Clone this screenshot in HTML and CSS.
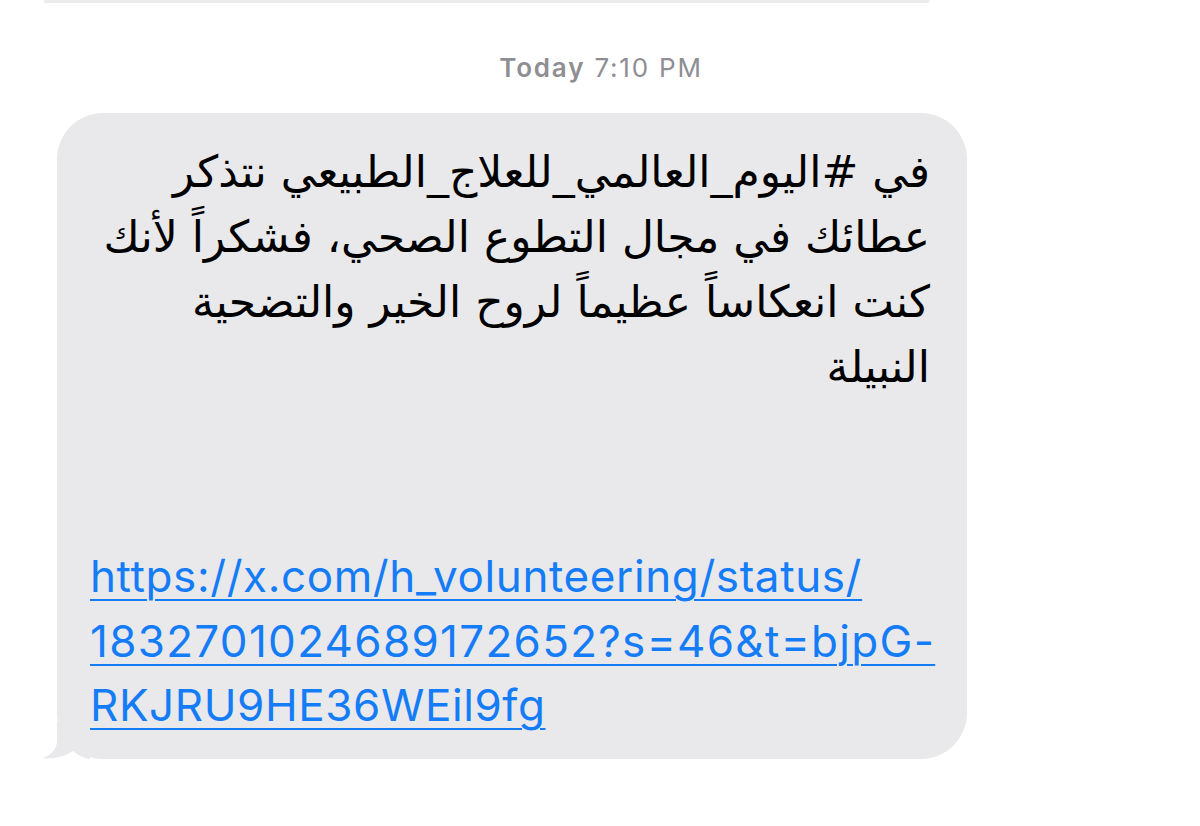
FILE: index.html
```html
<!DOCTYPE html>
<html lang="en">
<head>
<meta charset="utf-8">
<title>Message</title>
<link rel="stylesheet" href="styles.css">
</head>
<body>
<div class="prev"></div>
<div class="stamp"><span class="day">Today</span> 7:10 PM</div>
<div class="thread">
  <div class="bubble">
    <svg class="tail" width="50" height="40" viewBox="0 0 50 40" aria-hidden="true">
      <path d="M17 0 L17 18 C17 27 12 33 2 36 C12 37.5 24 35 33 29 C38 33 44 36.5 50 37 L50 0 Z" fill="#e9e9eb"/>
    </svg>
    <p class="msg" dir="rtl" lang="ar">في #اليوم_العالمي_للعلاج_الطبيعي نتذكر<br>عطائك في مجال التطوع الصحي، فشكراً لأنك<br>كنت انعكاساً عظيماً لروح الخير والتضحية<br>النبيلة</p>
    <a class="link" href="#">https://x.com/h_volunteering/status/<br><span class="link-digits">1832701024689172652?s=46&amp;t=bjpG-</span><br>RKJRU9HE36WEil9fg</a>
  </div>
</div>
</body>
</html>
```

FILE: styles.css
```css
html, body {
  margin: 0;
  padding: 0;
  background: #ffffff;
}

body {
  width: 1200px;
  height: 826px;
  overflow: hidden;
  font-family: Inter, "Liberation Sans", sans-serif;
}

.prev {
  height: 3px;
  margin-left: 44px;
  width: 886px;
  background: #ececee;
  border-bottom-right-radius: 6px;
  border-bottom-left-radius: 3px;
}

.stamp {
  margin-top: 50px;
  text-align: center;
  font-size: 26px;
  line-height: 30px;
  letter-spacing: 1.8px;
  color: #8e8e93;
  padding-left: 2px;
}

.stamp .day {
  font-weight: 600;
}

.thread {
  margin-top: 30px;
  padding-left: 57px;
}

.bubble {
  position: relative;
  width: 910px;
  box-sizing: border-box;
  height: 646px;
  background: #e9e9eb;
  border-radius: 46px;
  padding: 26px 37px 0 33px;
}

.tail {
  position: absolute;
  left: -17px;
  bottom: -3px;
}

.msg {
  margin: 0;
  font-family: "DejaVu Sans", "Noto Sans", sans-serif;
  font-size: 44px;
  line-height: 65px;
  color: #000000;
  text-align: right;
}

.link {
  display: block;
  margin-top: 145px;
  white-space: nowrap;
  font-family: Inter, "Liberation Sans", sans-serif;
  font-size: 44px;
  line-height: 64.5px;
  letter-spacing: 0.6px;
  color: #157cf7;
  text-decoration: underline;
  text-decoration-thickness: 2px;
  text-underline-offset: 7px;
}

.link-digits {
  letter-spacing: 1.3px;
}
```
